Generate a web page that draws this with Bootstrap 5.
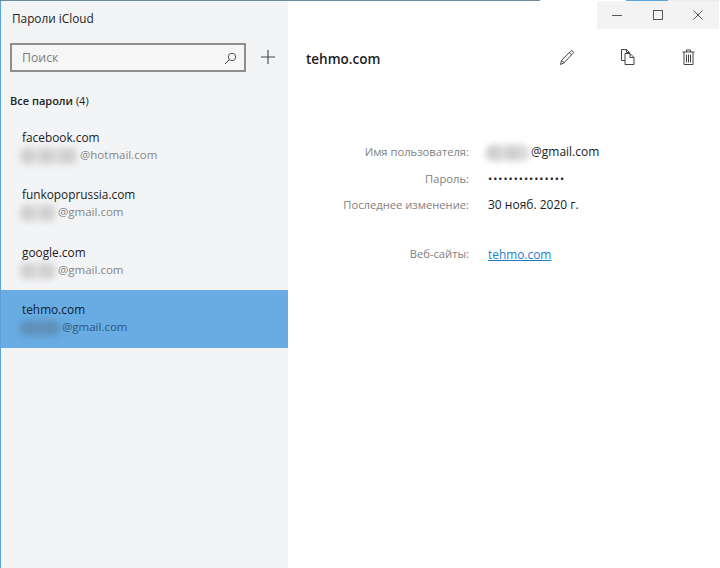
<!DOCTYPE html>
<html lang="ru"><head><meta charset="utf-8">
<title>Пароли iCloud</title>
<link href="https://cdn.jsdelivr.net/npm/bootstrap@5.3.0/dist/css/bootstrap.min.css" rel="stylesheet">
<style>
html,body{height:100%;margin:0;overflow:hidden;background:#fff}
body{font-family:"Open Sans","Noto Sans",sans-serif;color:#1a1a1a;font-size:12px}
.appwin{width:720px;height:568px}
.topstrip{height:1px}
.seg1{width:540px;background:#6d8ba3}
.seg2{width:86px;background:#fff}
.seg3{width:42px;background:#5ba3dc}
.seg4{flex:1;background:#eceef0}
.panes{height:567px}
.sidepane{width:288px;height:567px;background:#f3f4f6;border-left:1px solid #5ba3dc}
.apptitle{font-size:11.8px;line-height:16px;padding:9px 0 0 11px;height:36px;color:#222}
.searchrow{padding:6px 0 0 9px;height:49px}
.searchbox{width:236px;height:29px;border:2px solid #8e8e8e;background:#f6f6f7;padding:2px 7px 0 10px;color:#7d7d7d;font-size:12.3px}
.addbtn{margin-left:14px;margin-top:6px;width:16px;height:16px}
.grouptitle{font-size:11px;font-weight:600;line-height:16px;padding:7px 0 0 9px;height:32px;color:#222}
.grpcount{font-weight:400}
.pwditem{height:57.4px;padding:10px 0 0 21px;border:0;background:transparent}
.pwditem.pick{background:#68ace3}
.sitename{font-size:11.85px;line-height:18px;color:#1c1c1c}
.acct{font-size:11.5px;line-height:18px;color:#858585;display:flex}
.pick .sitename{color:#16222e}
.pick .acct{color:#2f5674}
.smear{display:inline-block;height:16px;margin:2px 2px 0 -2px;background:repeating-linear-gradient(90deg,#d0d0d0 0 14px,#dedede 14px 20px);filter:blur(3px);border-radius:6px}
.pick .smear{background:#5f92bd}
.detailpane{min-width:0}
.capbtns{background:#f3f3f4;width:122px;height:28px;margin-left:309px}
.capbtn{width:40.5px;height:28px}
.headrow{padding:0 0 0 18px;height:49px;margin-top:2px}
.hdrtitle{font-size:13.5px;font-weight:600;color:#1c1c1c;line-height:18px;margin-top:7px}
.toolicons{margin-left:auto;margin-top:3px;padding-right:1.5px}
.toolbtn{width:60.5px;display:flex;justify-content:center}
.fields{margin-top:63px}
.fieldrow{height:26.7px;line-height:18px}
.fieldlbl{width:181px;text-align:right;color:#808080;font-size:11.2px}
.fieldval{margin-left:19px;color:#1c1c1c;font-size:12px;display:flex}
.sitesrow{margin-top:22px}
.sitelink{color:#1e7ec8;text-decoration:underline;font-size:11.9px}
.dots{letter-spacing:1px;font-size:11px}
</style></head>
<body>
<div class="appwin d-flex flex-column">
  <div class="topstrip d-flex"><div class="seg1"></div><div class="seg2"></div><div class="seg3"></div><div class="seg4"></div></div>
  <div class="panes d-flex">
  <aside class="sidepane flex-shrink-0">
    <div class="apptitle">Пароли iCloud</div>
    <div class="searchrow d-flex align-items-start">
      <div class="searchbox d-flex align-items-center justify-content-between"><span>Поиск</span>
        <svg width="13" height="13" viewBox="0 0 13 13" fill="none" stroke="#555" stroke-width="1"><circle cx="8" cy="5" r="3.7"/><path d="M5.3 7.700 1 12"/></svg>
      </div>
      <svg class="addbtn" viewBox="0 0 16 16" stroke="#444" stroke-width="1.1"><path d="M8 1v14M1 8h14"/></svg>
    </div>
    <div class="grouptitle">Все пароли <span class="grpcount">(4)</span></div>
    <div class="pwdlist list-group list-group-flush">
      <div class="pwditem list-group-item"><div class="sitename">facebook.com</div><div class="acct"><span class="smear" style="width:58px"></span><span>@hotmail.com</span></div></div>
      <div class="pwditem list-group-item"><div class="sitename">funkopoprussia.com</div><div class="acct"><span class="smear" style="width:36px"></span><span>@gmail.com</span></div></div>
      <div class="pwditem list-group-item"><div class="sitename">google.com</div><div class="acct"><span class="smear" style="width:36px"></span><span>@gmail.com</span></div></div>
      <div class="pwditem pick list-group-item"><div class="sitename">tehmo.com</div><div class="acct"><span class="smear" style="width:40px"></span><span>@gmail.com</span></div></div>
    </div>
  </aside>
  <main class="detailpane flex-grow-1">
    <div class="capbtns d-flex">
      <div class="capbtn d-flex align-items-center justify-content-center"><svg width="10" height="10" viewBox="0 0 10 10" stroke="#555"><path d="M0 5.500h10"/></svg></div>
      <div class="capbtn d-flex align-items-center justify-content-center"><svg width="10" height="10" viewBox="0 0 10 10" fill="none" stroke="#555"><rect x=".5" y=".5" width="9" height="9"/></svg></div>
      <div class="capbtn d-flex align-items-center justify-content-center"><svg width="10" height="10" viewBox="0 0 10 10" stroke="#555"><path d="M.5.5l9 9M9.500.5l-9 9"/></svg></div>
    </div>
    <div class="headrow d-flex align-items-center">
      <div class="hdrtitle">tehmo.com</div>
      <div class="toolicons d-flex">
        <div class="toolbtn"><svg width="16" height="17" viewBox="0 0 16 17" fill="none" stroke="#444"><path d="M1.500 15.500l1-4L11.500 2.300a1.500 1.500 0 0 1 2.300 0 1.500 1.500 0 0 1 0 2.200L5 13.800zM2.500 11.500l3 2.300M10.300 3.500l2.300 2.200"/></svg></div>
        <div class="toolbtn"><svg width="14" height="16" viewBox="0 0 14 16" fill="none" stroke="#444"><path d="M4 11.500H.5V.5h5l3 3v1"/><path d="M4 4.500h5l4 4v7H4zM9 4.500v4h4M5.500.5v3h3"/></svg></div>
        <div class="toolbtn"><svg width="13" height="16" viewBox="0 0 13 16" fill="none" stroke="#444"><path d="M.5 3h12M4.500 3V1h4v2M2 3v12.500h9V3M4.500 5.500v8M6.500 5.500v8M8.500 5.500v8"/></svg></div>
      </div>
    </div>
    <div class="fields">
      <div class="fieldrow d-flex"><div class="fieldlbl">Имя пользователя:</div><div class="fieldval"><span class="smear" style="width:43px"></span><span>@gmail.com</span></div></div>
      <div class="fieldrow d-flex"><div class="fieldlbl">Пароль:</div><div class="fieldval dots">•••••••••••••••</div></div>
      <div class="fieldrow d-flex"><div class="fieldlbl">Последнее изменение:</div><div class="fieldval">30 нояб. 2020 г.</div></div>
      <div class="fieldrow sitesrow d-flex"><div class="fieldlbl">Веб-сайты:</div><div class="fieldval"><a class="sitelink" href="#">tehmo.com</a></div></div>
    </div>
  </main>
  </div>
</div>
</body></html>
